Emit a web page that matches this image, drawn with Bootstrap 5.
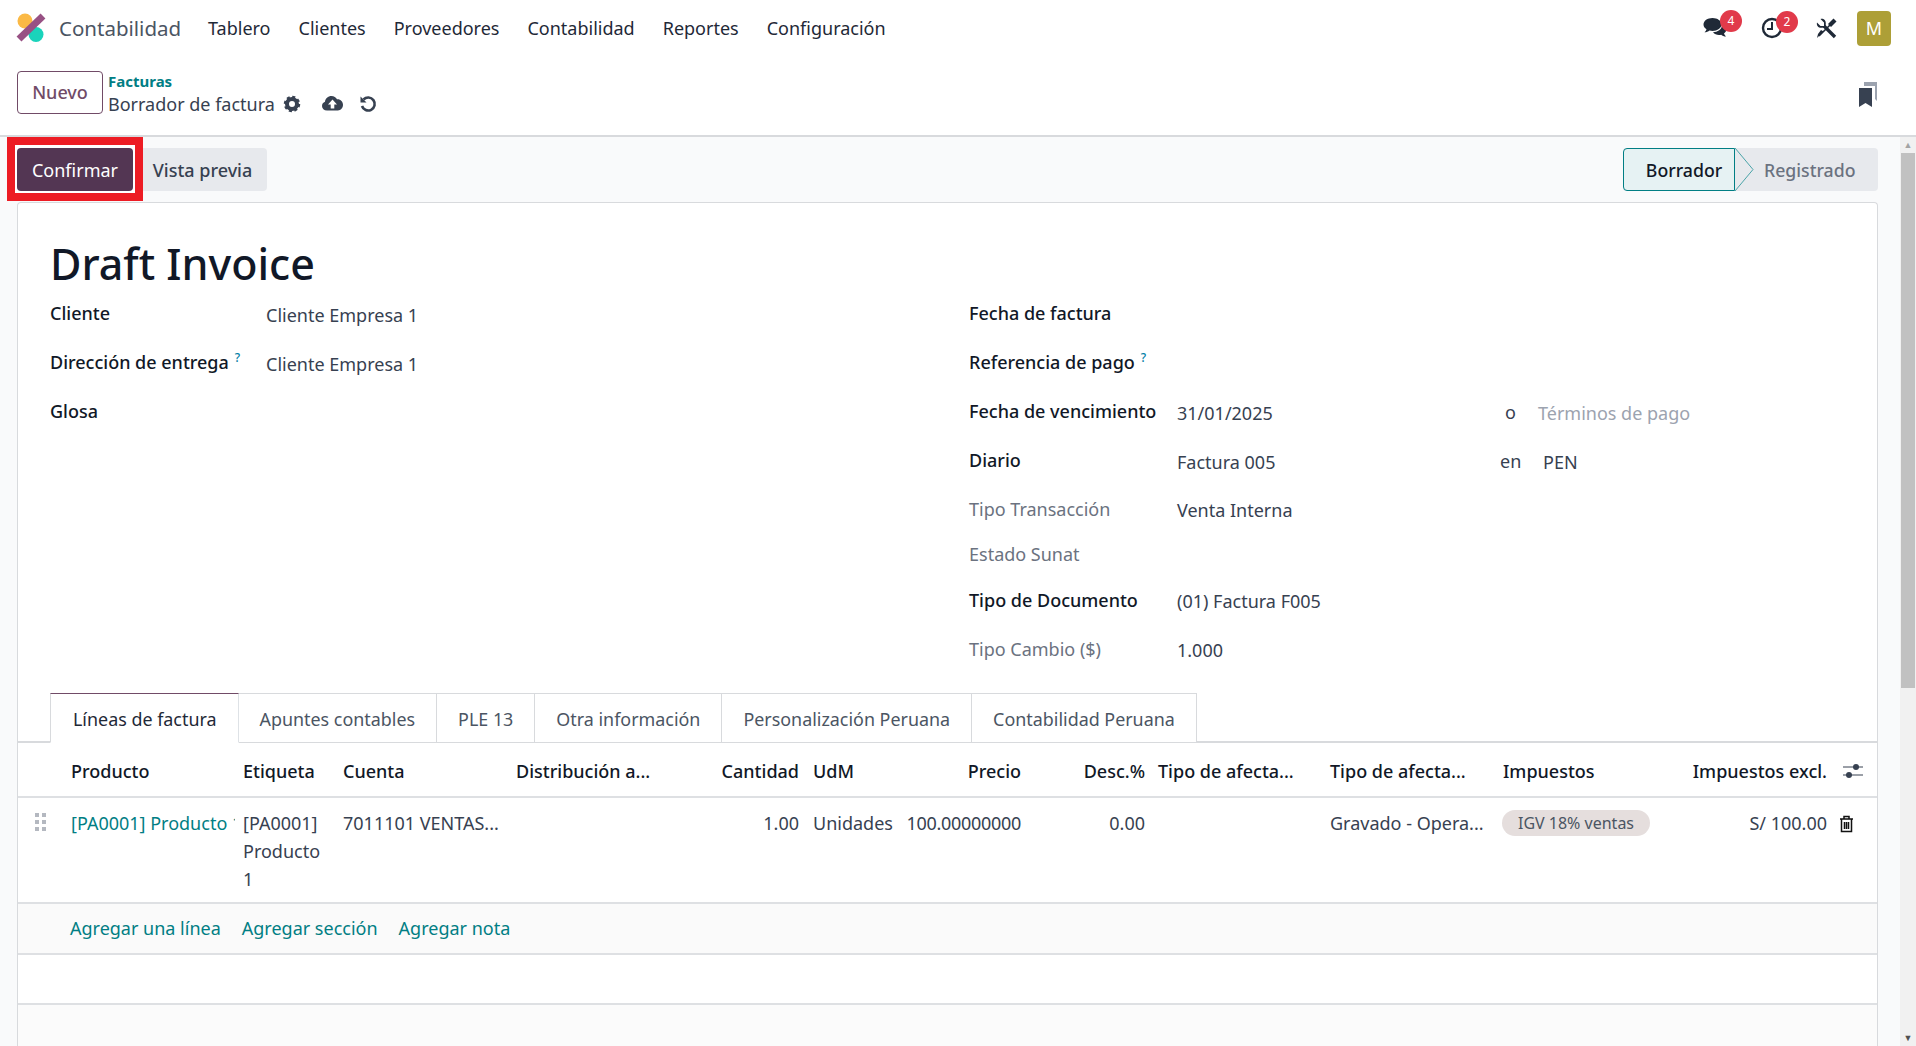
<!DOCTYPE html>
<html lang="es">

<head>
    <meta charset="UTF-8">
    <meta name="viewport" content="width=device-width, initial-scale=1.0">
    <title>Borrador de factura</title>
    <link rel="stylesheet" href="https://cdn.jsdelivr.net/npm/bootstrap@5.3.2/dist/css/bootstrap.min.css">
    <script src="https://cdn.jsdelivr.net/npm/bootstrap@5.3.2/dist/js/bootstrap.bundle.min.js"></script>
    <style>
        html, body { height: 1046px; overflow: hidden; }
        body { font-family: "Noto Sans", "Open Sans", sans-serif; font-size: 18px; color: #374151; background: #fff; }
        a { text-decoration: none; }

        /* barra superior */
        .top-bar { height: 56px; padding: 0 25px 0 16px; }
        .app-logo { width: 30px; height: 30px; margin-right: 13px; }
        .app-name { font-size: 20.5px; color: #4b5563; margin-right: 28px; width: 121px; white-space: nowrap; }
        .menu-link { color: #1f2937; font-size: 18px; margin-right: 28px; white-space: nowrap; }
        .sys-icon { position: relative; display: block; }
        .gap-chat { margin-right: 34px; }
        .gap-clock { margin-right: 33px; }
        .gap-tools { margin-right: 20px; }
        .sys-badge { position: absolute; width: 22px; height: 22px; border-radius: 50%; background: #e13a4a; color: #fff; font-size: 12px; line-height: 22px; text-align: center; }
        .user-tile { width: 34px; height: 35px; background: #ad9f37; color: #fff; border-radius: 4px; text-align: center; line-height: 35px; font-size: 18px; }

        /* panel de control */
        .ctrl-panel { height: 81px; padding: 15px 30px 0 17px; border-bottom: 2px solid #d8dadd; }
        .btn-new { width: 86px; height: 43px; border: 1px solid #714b67; color: #714b67; font-size: 18px; font-weight: 500; padding: 0; border-radius: 4px; background: #fff; }
        .crumb-wrap { margin-left: 5px; line-height: 1.2; }
        .crumb-link { color: #017e84; font-weight: 700; font-size: 15px; display: block; height: 20px; line-height: 21px; }
        .crumb-now { font-size: 18px; line-height: 26px; color: #374151; }
        .bookmark-ico { margin-top: 11px; margin-right: 9px; }

        /* zona de contenido */
        .work-area { height: 909px; }
        .work-main { width: 1900px; background: #f9fafb; }
        .fake-scroll { width: 16px; background: #f1f1f1; padding: 0 1px; }
        .fake-up { height: 16px; color: #a3a3a3; font-size: 9px; line-height: 16px; text-align: center; }
        .fake-thumb { height: 535px; background: #c1c1c1; }
        .fake-down { height: 16px; color: #505050; font-size: 9px; line-height: 16px; text-align: center; }

        .status-row { height: 65px; padding: 0 22px 0 7px; }
        .mark-box { width: 136px; height: 64px; border: 8px solid #ed1c24; background: #fff; padding: 3px 2px; }
        .btn-confirm { width: 100%; height: 43px; background: #533653; color: #fff; border: 0; border-radius: 4px; padding: 2px 0 0; font-size: 18px; }
        .btn-preview { width: 124px; height: 43px; margin-top: 11px; background: #e7e9ed; color: #374151; font-size: 18px; font-weight: 500; border: 0; padding: 2px 5px 0 0; border-radius: 0 4px 4px 0; }
        .state-bar { height: 43px; margin-top: 11px; width: 255px; background: #e7e9ed; border-radius: 4px; position: relative; font-size: 17.7px; }
        .state-now { width: 112px; height: 43px; background: #e6f2f3; border: 1px solid #017e84; border-radius: 4px 0 0 4px; text-align: center; line-height: 43px; color: #111827; font-weight: 500; padding-left: 10px; }
        .state-arrow { width: 19px; height: 43px; display: block; }
        .state-next { color: #6b7280; font-weight: 500; margin-left: 10px; line-height: 45px; }

        .inv-sheet { margin-left: 17px; width: 1861px; background: #fff; border: 1px solid #d8dadd; border-bottom: 0; border-radius: 4px 4px 0 0; height: 844px; }
        .inv-title { font-size: 43px; font-weight: 500; color: #111827; margin: 0; padding: 33px 0 0 32px; height: 87px; line-height: 56px; }
        .inv-form { padding-left: 32px; height: 403px; }
        .form-left { width: 919px; }
        .form-line { display: flex; align-items: center; height: 49px; white-space: nowrap; }
        .form-line.h48 { height: 48px; }
        .form-line.h42 { height: 42px; }
        .form-line.h50 { height: 50px; }
        .lbl { color: #111827; font-weight: 500; font-size: 18px; margin-top: -2px; }
        .lbl.soft { color: #6b7280; font-weight: 400; }
        .form-left .lbl { width: 216px; }
        .form-right .lbl { width: 208px; }
        .val { padding-top: 1px; }
        .val-wide { width: 323px; }
        .q-mark { color: #0180a5; font-size: 12px; vertical-align: super; margin-left: 6px; font-weight: 500; line-height: 0; }
        .aux-o { width: 33px; margin-left: 5px; }
        .aux-en { width: 43px; }
        .muted-hint { color: #9ca3af; }

        .inv-tabs { padding-left: 32px; height: 50px; border-bottom: 2px solid #d8dadd; flex-wrap: nowrap; }
        .inv-tabs .nav-link { height: 50px; color: #4b5563; font-size: 17.9px; padding: 0 21px; line-height: 50px; border: 1px solid #d8dadd; border-left: 0; border-radius: 0; margin: 0; white-space: nowrap; background: #fff; }
        .inv-tabs .nav-item:first-child .nav-link { border-left: 1px solid #d8dadd; }
        .inv-tabs .nav-link.active { color: #1f2937; border-top: 1px solid #714b67; border-bottom-color: #fff; padding: 0 21px 0 22px; }

        .lines-table { table-layout: fixed; width: 1859px; margin: 0; font-size: 18px; color: #374151; }
        .lines-table th, .lines-table td { padding: 0 5px; border-bottom: 2px solid #dee0e3; white-space: nowrap; overflow: hidden; background: transparent; color: inherit; }
        .lines-table th { height: 54px; vertical-align: middle; color: #111827; font-weight: 500; padding-top: 3px; }
        .lines-table td { height: 106px; vertical-align: top; padding-top: 11px; line-height: 28px; }
        .lines-table th.afecta-first { padding-left: 8px; }
        .prod-link { color: #017e84; display: block; width: 164px; overflow: hidden; }
        .num-tight { letter-spacing: -.3px; }
        .drag-ico { display: block; margin: 4px 0 0 12px; }
        .slider-ico { display: block; margin-left: 6px; }
        .trash-ico { display: block; margin: 6px 0 0 2px; }
        .tax-pill { display: inline-block; width: 148px; height: 26px; margin: 1px 0 0 -1px; border-radius: 13px; background: #e5dedd; font-size: 16px; line-height: 26px; text-align: center; color: #4b5563; vertical-align: top; }
        .add-row { height: 51px; background: #fafafa; border-bottom: 2px solid #dee0e3; padding-left: 52px; gap: 21px; }
        .add-row a { color: #017e84; font-size: 18px; }
        .blank-row { height: 50px; border-bottom: 2px solid #dee0e3; }
        .tail-row { height: 42px; background: #fbfbfb; }
    </style>
</head>

<body>
    <!-- Barra superior -->
    <div class="top-bar d-flex align-items-center">
        <svg class="app-logo" viewBox="0 0 30 30">
            <circle cx="9" cy="8" r="7.5" fill="#fbb945"/>
            <circle cx="20" cy="21.5" r="7.5" fill="#1ad3bb"/>
            <path d="M3 26 L27 3" stroke="#985184" stroke-width="7"/>
        </svg>
        <span class="app-name">Contabilidad</span>
        <a class="menu-link" href="#">Tablero</a>
        <a class="menu-link" href="#">Clientes</a>
        <a class="menu-link" href="#">Proveedores</a>
        <a class="menu-link" href="#">Contabilidad</a>
        <a class="menu-link" href="#">Reportes</a>
        <a class="menu-link" href="#">Configuración</a>

        <div class="ms-auto d-flex align-items-center">
            <span class="sys-icon gap-chat">
                <svg width="24" height="22" viewBox="0 0 24 22" class="d-block">
                    <path d="M9.500 1C4.500 1 .5 3.800.5 7.500c0 2 1.200 3.600 3 4.800-.3 1.200-1 2.200-2 3 2 0 3.800-.8 5-1.800 1 .2 2 .4 3 .4 5 0 9-2.800 9-6.400S14.500 1 9.500 1z" fill="#1f2937"/>
                    <path d="M19 8c0 4.500-4.500 7-9 7.300 1.400 1.700 3.600 2.700 6 2.700.8 0 1.500-.1 2.200-.3 1 .9 2.800 1.800 4.800 1.800-1-.8-1.700-1.900-2-3 1.500-1 2.500-2.500 2.500-4.200 0-2-1.800-3.700-4.500-4.300z" fill="#1f2937"/>
                </svg>
                <span class="sys-badge" style="top:-7px;left:17px">4</span>
            </span>
            <span class="sys-icon gap-clock">
                <svg width="22" height="22" viewBox="0 0 22 22" class="d-block">
                    <circle cx="11" cy="11" r="9" fill="none" stroke="#1f2937" stroke-width="2.400"/>
                    <path d="M11 5v7H6" fill="none" stroke="#1f2937" stroke-width="2"/>
                </svg>
                <span class="sys-badge" style="top:-6px;left:15px">2</span>
            </span>
            <span class="sys-icon gap-tools">
                <svg width="21" height="21" viewBox="0 0 21 21" class="d-block">
                    <path d="M8 8 L19 19" stroke="#1f2937" stroke-width="3.400"/>
                    <path d="M1 4.500 L4.500 8 L8 8 L8 4.500 L4.500 1 C7.500 .2 10 2.500 9.800 5.500 L9.500 9.500 L5.500 9.800 C2.500 10 .2 7.500 1 4.500z" fill="#1f2937"/>
                    <path d="M3 18 L18 3" stroke="#1f2937" stroke-width="1.600"/>
                    <path d="M13.500 7.500 L19 2" stroke="#1f2937" stroke-width="4.200"/>
                    <path d="M7.500 13.500 L4 17 L1 20 L2 16 L5 12z" fill="#1f2937"/>
                </svg>
            </span>
            <span class="user-tile">M</span>
        </div>
    </div>

    <!-- Panel de control -->
    <div class="ctrl-panel d-flex align-items-start">
        <button class="btn btn-new" type="button">Nuevo</button>
        <div class="crumb-wrap">
            <a class="crumb-link" href="#">Facturas</a>
            <div class="d-flex align-items-center crumb-now">
                <span>Borrador de factura</span>
                <svg class="ms-2" width="18" height="18" viewBox="0 0 18 18">
                    <circle cx="9" cy="9" r="5" fill="none" stroke="#374151" stroke-width="4"/>
                    <circle cx="9" cy="9" r="7" fill="none" stroke="#374151" stroke-width="2.500" stroke-dasharray="3 2.500"/>
                </svg>
                <svg style="margin-left:21px;margin-top:-2px" width="21" height="17" viewBox="0 0 21 16">
                    <path d="M5 15C2 15 0 13 0 10.500 0 8.500 1.200 7 3 6.300 3.300 3 6 .5 9.500.5c2.500 0 4.500 1.300 5.500 3.300 3.500-.3 6 2.300 6 5.500 0 3.200-2.300 5.700-5 5.700z" fill="#374151"/>
                    <path d="M10.500 4 L15 9 H12.300 V13 H8.700 V9 H6z" fill="#fff"/>
                </svg>
                <svg style="margin-left:16px" width="18" height="18" viewBox="0 0 18 18">
                    <path d="M4.500 4.500 A6.500 6.500 0 1 1 3 11" fill="none" stroke="#374151" stroke-width="2.600"/>
                    <path d="M1.500 1.500 L1.500 7.500 L7.500 7.500z" fill="#374151"/>
                </svg>
            </div>
        </div>
        <svg class="ms-auto bookmark-ico" width="18" height="25" viewBox="0 0 18 25">
            <path d="M5 0H18V19L16 17V4H5z" fill="#9ca3af"/>
            <path d="M0 6H13V25L6.500 21 0 25z" fill="#374151"/>
        </svg>
    </div>

    <div class="work-area d-flex">
        <div class="work-main">
            <!-- Botones y estado -->
            <div class="status-row d-flex align-items-start">
                <div class="mark-box"><button class="btn btn-confirm" type="button">Confirmar</button></div>
                <button class="btn btn-preview" type="button">Vista previa</button>
                <div class="state-bar ms-auto d-flex">
                    <div class="state-now">Borrador</div>
                    <svg class="state-arrow" viewBox="0 0 19 43">
                        <path d="M0 0 L18 21.500 L0 43" fill="#e7e9ed" stroke="#4aa3a8" stroke-width="1"/>
                    </svg>
                    <span class="state-next">Registrado</span>
                </div>
            </div>

            <!-- Hoja de la factura -->
            <div class="inv-sheet">
                <h1 class="inv-title">Draft Invoice</h1>
                <div class="inv-form d-flex">
                    <div class="form-left">
                        <div class="form-line"><span class="lbl">Cliente</span><span class="val">Cliente Empresa 1</span></div>
                        <div class="form-line"><span class="lbl">Dirección de entrega<span class="q-mark">?</span></span><span class="val">Cliente Empresa 1</span></div>
                        <div class="form-line"><span class="lbl">Glosa</span></div>
                    </div>
                    <div class="form-right">
                        <div class="form-line"><span class="lbl">Fecha de factura</span></div>
                        <div class="form-line"><span class="lbl">Referencia de pago<span class="q-mark">?</span></span></div>
                        <div class="form-line"><span class="lbl">Fecha de vencimiento</span><span class="val val-wide">31/01/2025</span><span class="aux-o">o</span><span class="val muted-hint">Términos de pago</span></div>
                        <div class="form-line"><span class="lbl">Diario</span><span class="val val-wide">Factura 005</span><span class="aux-en">en</span><span class="val">PEN</span></div>
                        <div class="form-line h48"><span class="lbl soft">Tipo Transacción</span><span>Venta Interna</span></div>
                        <div class="form-line h42"><span class="lbl soft">Estado Sunat</span></div>
                        <div class="form-line h50"><span class="lbl">Tipo de Documento</span><span>(01) Factura F005</span></div>
                        <div class="form-line h48"><span class="lbl soft">Tipo Cambio ($)</span><span>1.000</span></div>
                    </div>
                </div>

                <ul class="nav nav-tabs inv-tabs">
                    <li class="nav-item"><a class="nav-link active" href="#">Líneas de factura</a></li>
                    <li class="nav-item"><a class="nav-link" href="#">Apuntes contables</a></li>
                    <li class="nav-item"><a class="nav-link" href="#">PLE 13</a></li>
                    <li class="nav-item"><a class="nav-link" href="#">Otra información</a></li>
                    <li class="nav-item"><a class="nav-link" href="#">Personalización Peruana</a></li>
                    <li class="nav-item"><a class="nav-link" href="#">Contabilidad Peruana</a></li>
                </ul>

                <table class="table lines-table">
                    <colgroup>
                        <col style="width:48px"><col style="width:172px"><col style="width:100px"><col style="width:173px"><col style="width:179px"><col style="width:114px"><col style="width:222px"><col style="width:124px"><col style="width:175px"><col style="width:173px"><col style="width:180px"><col style="width:154px"><col>
                    </colgroup>
                    <thead>
                        <tr>
                            <th></th>
                            <th>Producto</th>
                            <th>Etiqueta</th>
                            <th>Cuenta</th>
                            <th>Distribución a...</th>
                            <th class="text-end">Cantidad</th>
                            <th>
                                <div class="d-flex"><span class="ms-1">UdM</span><span class="ms-auto">Precio</span></div>
                            </th>
                            <th class="text-end">Desc.%</th>
                            <th class="afecta-first">Tipo de afecta...</th>
                            <th>Tipo de afecta...</th>
                            <th>Impuestos</th>
                            <th class="text-end">Impuestos excl.</th>
                            <th>
                                <svg class="slider-ico" width="20" height="16" viewBox="0 0 20 16">
                                    <path d="M0 4H20M0 12H20" stroke="#374151" stroke-width="1"/>
                                    <circle cx="13" cy="4" r="3" fill="#374151"/>
                                    <circle cx="6" cy="12" r="3" fill="#374151"/>
                                </svg>
                            </th>
                        </tr>
                    </thead>
                    <tbody>
                        <tr>
                            <td>
                                <svg class="drag-ico" width="11" height="18" viewBox="0 0 11 18">
                                    <path d="M0 0h4v4H0zM7 0h4v4H7zM0 7h4v4H0zM7 7h4v4H7zM0 14h4v4H0zM7 14h4v4H7z" fill="#b4b8c0"/>
                                </svg>
                            </td>
                            <td><a class="prod-link" href="#">[PA0001] Producto 1</a></td>
                            <td>[PA0001]<br>Producto<br>1</td>
                            <td>7011101 VENTAS...</td>
                            <td></td>
                            <td class="text-end">1.00</td>
                            <td>
                                <div class="d-flex"><span class="ms-1">Unidades</span><span class="ms-auto num-tight">100.00000000</span></div>
                            </td>
                            <td class="text-end">0.00</td>
                            <td></td>
                            <td>Gravado - Opera...</td>
                            <td><span class="tax-pill">IGV 18% ventas</span></td>
                            <td class="text-end">S/ 100.00</td>
                            <td>
                                <svg class="trash-ico" width="15" height="18" viewBox="0 0 15 18">
                                    <path d="M1 4H14M5 4V1.500H10V4M2.500 4V16.500H12.500V4M5.500 7V14M7.500 7V14M9.500 7V14" fill="none" stroke="#111" stroke-width="1.500"/>
                                </svg>
                            </td>
                        </tr>
                    </tbody>
                </table>

                <div class="add-row d-flex align-items-center">
                    <a href="#">Agregar una línea</a>
                    <a href="#">Agregar sección</a>
                    <a href="#">Agregar nota</a>
                </div>
                <div class="blank-row"></div>
                <div class="tail-row"></div>
            </div>
        </div>

        <!-- Barra de desplazamiento -->
        <div class="fake-scroll d-flex flex-column">
            <div class="fake-up">▲</div>
            <div class="fake-thumb"></div>
            <div class="fake-down mt-auto">▼</div>
        </div>
    </div>
</body>

</html>
